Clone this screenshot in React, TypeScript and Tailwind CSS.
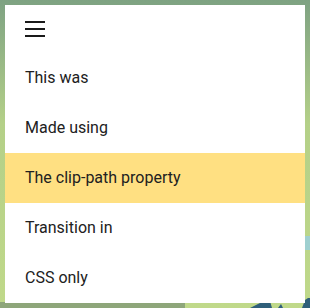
const items = ['This was', 'Made using', 'The clip-path property', 'Transition in', 'CSS only'];

export default function App() {
  return (
    <div
      className="relative w-[310px] h-[308px] overflow-hidden bg-gradient-to-b from-[#7ea282] via-[#b4d088] via-40% to-[#c0d98a] p-[5px]"
      style={{ fontFamily: 'Roboto, "Liberation Sans", sans-serif' }}
    >
      {/* scenery peeking out under the menu */}
      <div className="absolute left-0 bottom-0 w-[185px] h-[6px] bg-[#8ea67a]" />
      <svg className="absolute right-0 bottom-0" width="60" height="10" viewBox="0 0 60 10">
        <path d="M0 10 L12 4 L20 3 L22 10 Z" fill="#2f5f7a" />
        <path d="M28 10 L31 6 L33 10 Z" fill="#2f5f7a" />
        <path d="M52 10 L55 2 L58 0 L60 0 L60 10 Z" fill="#2f5f7a" />
      </svg>
      <div className="absolute right-0 top-[236px] w-[5px] h-[14px] bg-[#9fd0d0]" />

      <div className="relative bg-white w-[300px] h-[298px] flex flex-col">
        <div className="h-[48px] flex items-center px-[20px]">
          <svg width="20" height="16" viewBox="0 0 20 16" className="text-[#1a1a1a]">
            <rect x="0" y="0" width="20" height="2" fill="currentColor" />
            <rect x="0" y="7" width="20" height="2" fill="currentColor" />
            <rect x="0" y="14" width="20" height="2" fill="currentColor" />
          </svg>
        </div>
        {items.map((item, i) => (
          <div
            key={item}
            className={`h-[50px] flex items-center px-[20px] text-[16px] text-[#212121] ${
              i === 2 ? 'bg-[#ffe082]' : ''
            }`}
          >
            {item}
          </div>
        ))}
      </div>
    </div>
  );
}
